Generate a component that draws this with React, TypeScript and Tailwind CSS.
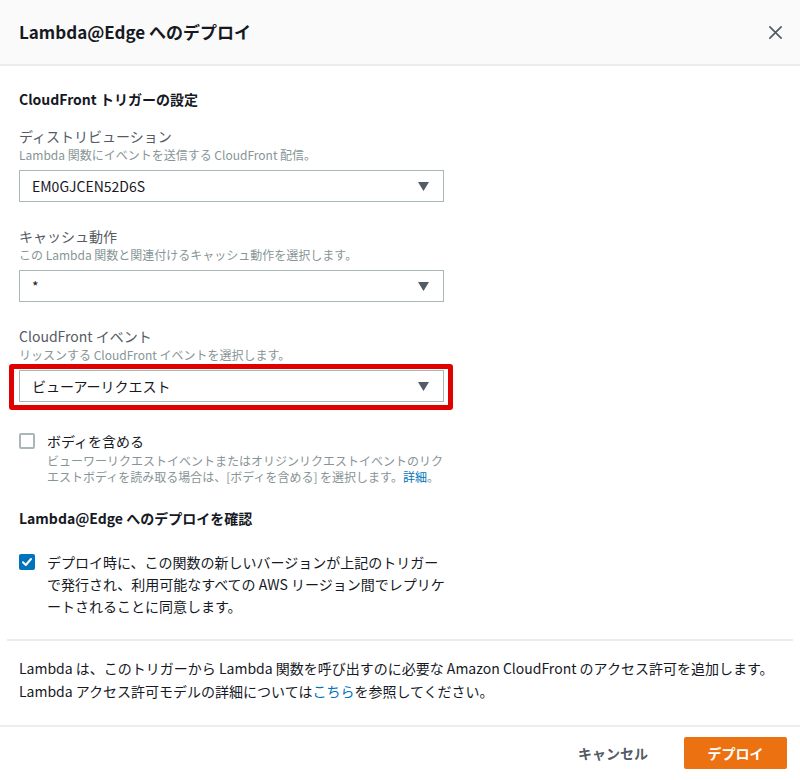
import { ReactNode } from "react";

const font = "font-['Noto_Sans_CJK_JP','Noto_Sans',sans-serif]";

const Caret = () => (
  <svg width="11" height="9" viewBox="0 0 11 9" className="shrink-0">
    <path d="M0 0 H11 L5.5 9 Z" fill="#545b64" />
  </svg>
);

const SelectBox = ({ value }: { value: string }) => (
  <div className="flex h-[32px] w-[425px] items-center justify-between border border-[#aab7b8] bg-white pl-[12px] pr-[14px] text-[14px] text-[#16191f]">
    <span>{value}</span>
    <Caret />
  </div>
);

interface FieldProps {
  label: string;
  hint: string;
  children: ReactNode;
  className?: string;
}

const Field = ({ label, hint, children, className }: FieldProps) => (
  <div className={className}>
    <div className="text-[14px] leading-[20px] text-[#545b64]">{label}</div>
    <div className="text-[12px] leading-[18px] text-[#879596]">{hint}</div>
    <div className="mt-[6px]">{children}</div>
  </div>
);

export default function App() {
  return (
    <div className={`${font} h-[780px] w-[800px] overflow-hidden bg-white`}>
      {/* header */}
      <div className="flex h-[66px] items-center justify-between border-b-2 border-[#eaeded] bg-[#fafafa] pl-[19px] pr-[18px]">
        <h1 className="text-[17px] font-bold text-[#16191f]">Lambda@Edge へのデプロイ</h1>
        <svg width="15" height="15" viewBox="0 0 16 16" className="mr-[-1px]">
          <path d="M2 2 L14 14 M14 2 L2 14" stroke="#545b64" strokeWidth="1.8" strokeLinecap="round" />
        </svg>
      </div>

      {/* body */}
      <div className="px-[19px] pt-[23px]">
        <h2 className="text-[14px] font-bold leading-[20px] text-[#16191f]">CloudFront トリガーの設定</h2>

        <Field className="mt-[17px]" label="ディストリビューション" hint="Lambda 関数にイベントを送信する CloudFront 配信。">
          <SelectBox value="EM0GJCEN52D6S" />
        </Field>

        <Field className="mt-[24px]" label="キャッシュ動作" hint="この Lambda 関数と関連付けるキャッシュ動作を選択します。">
          <SelectBox value="*" />
        </Field>

        <Field className="mt-[24px]" label="CloudFront イベント" hint="リッスンする CloudFront イベントを選択します。">
          <div className="relative w-[425px]">
            <SelectBox value="ビューアーリクエスト" />
            <div className="pointer-events-none absolute bottom-[-8px] left-[-10px] right-[-9px] top-[-6px] rounded-[3px] border-[5px] border-[#df0000]" />
          </div>
        </Field>

        <div className="mt-[29px] flex gap-[12px]">
          <div className="mt-[2px] h-[16px] w-[16px] shrink-0 rounded-[2px] border-2 border-[#aab7b8] bg-white" />
          <div>
            <div className="text-[14px] leading-[20px] text-[#16191f]">ボディを含める</div>
            <div className="mt-[2px] text-[12px] leading-[16px] text-[#879596]">
              ビューワーリクエストイベントまたはオリジンリクエストイベントのリク
              <br />
              エストボディを読み取る場合は、[ボディを含める] を選択します。
              <span className="text-[#0073bb]">詳細</span>。
            </div>
          </div>
        </div>

        <h2 className="mt-[23px] text-[14px] font-bold leading-[20px] text-[#16191f]">
          Lambda@Edge へのデプロイを確認
        </h2>

        <div className="mt-[23px] flex gap-[12px]">
          <div className="mt-[3px] flex h-[16px] w-[16px] shrink-0 items-center justify-center rounded-[2px] bg-[#0073bb]">
            <svg width="12" height="12" viewBox="0 0 12 12">
              <path d="M2 6.2 L4.8 9 L10 3" fill="none" stroke="white" strokeWidth="2" strokeLinecap="round" strokeLinejoin="round" />
            </svg>
          </div>
          <div className="text-[14px] leading-[22px] text-[#16191f]">
            デプロイ時に、この関数の新しいバージョンが上記のトリガー
            <br />
            で発行され、利用可能なすべての AWS リージョン間でレプリケ
            <br />
            ートされることに同意します。
          </div>
        </div>
      </div>

      <div className="mx-[7px] mt-[22px] border-t-2 border-[#eaeded]" />

      <div className="px-[19px] pt-[16px] text-[14px] leading-[23px] text-[#16191f]">
        <p>Lambda は、このトリガーから Lambda 関数を呼び出すのに必要な Amazon CloudFront のアクセス許可を追加します。</p>
        <p>
          Lambda アクセス許可モデルの詳細については<span className="text-[#0073bb]">こちら</span>を参照してください。
        </p>
      </div>

      <div className="mt-[22px] border-t-2 border-[#eaeded]" />

      <div className="flex items-center justify-end gap-[16px] pr-[13px] pt-[10px]">
        <button className="px-[20px] text-[14px] font-bold text-[#545b64]">キャンセル</button>
        <button className="h-[32px] w-[103px] rounded-[2px] bg-[#ec7211] text-[14px] font-bold text-white">デプロイ</button>
      </div>
    </div>
  );
}
